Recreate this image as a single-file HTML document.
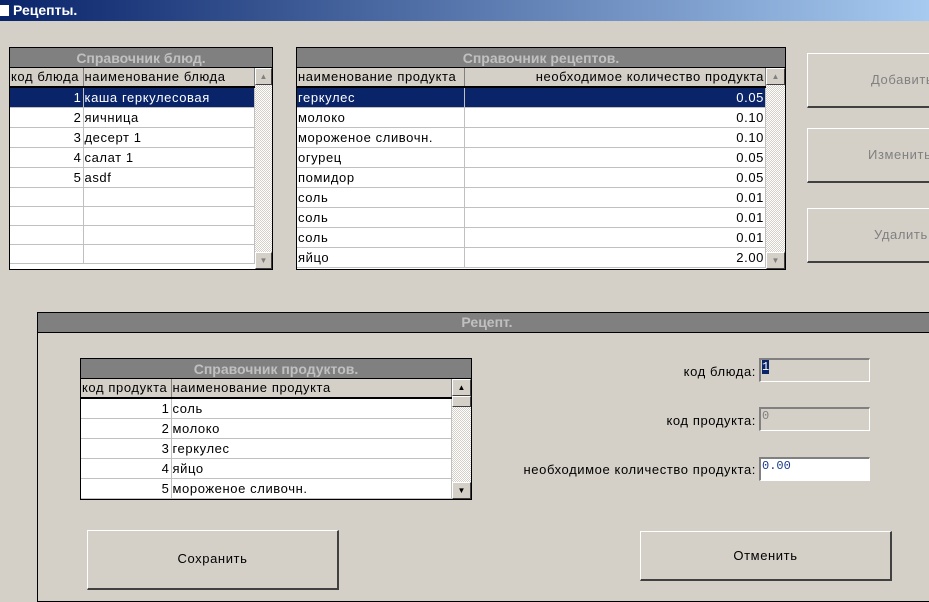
<html><head><style>
body{margin:0;width:929px;height:586px;overflow:hidden;background:#d4d0c8;font-family:"Liberation Sans",sans-serif;font-size:13px;letter-spacing:.6px;position:relative}
.a{position:absolute}
.tb{left:0;top:0;width:929px;height:21px;background:linear-gradient(90deg,#0a246a,#a6caf0);color:#fff;font-weight:bold;font-size:14px;line-height:21px;letter-spacing:0}
.grid{position:absolute;border:1px solid #000;background:#fff;overflow:hidden}
.gt{height:19px;background:#808080;color:#c0c0c0;font-weight:bold;font-size:14px;letter-spacing:0;text-align:center;line-height:20px;border-bottom:1px solid #000}
table{border-collapse:collapse;table-layout:fixed}
td{height:19px;border-right:1px solid #c0c0c0;border-bottom:1px solid #c0c0c0;padding:0 1px;white-space:nowrap;overflow:hidden;font-size:13px;line-height:19px}
tr.h td{background:#d4d0c8;border-right:1px solid #808080;border-bottom:2px solid #000;height:18px;line-height:18px}
tr.s td{background:#0a246a;color:#fff}
.r{text-align:right}
.sb{position:absolute;right:0;background:repeating-conic-gradient(#d4d0c8 0 25%,#fff 0 50%) 0 0/2px 2px}
.btn{position:absolute;background:#d4d0c8;border-top:1px solid #fff;border-left:1px solid #fff;border-right:2px solid #404040;border-bottom:2px solid #404040;box-sizing:border-box;text-align:center;font-size:13px}
.sbtn{position:absolute;width:17px;height:17px;background:#d4d0c8;border-top:1px solid #fff;border-left:1px solid #fff;border-right:1px solid #404040;border-bottom:1px solid #404040;box-sizing:border-box;font-size:8px;text-align:center;line-height:15px;letter-spacing:0}
.lbl{position:absolute;right:173px;font-size:13px}
.inp{position:absolute;left:759px;width:111px;height:24px;box-sizing:border-box;border-top:2px solid #808080;border-left:2px solid #808080;border-right:1px solid #fff;border-bottom:1px solid #fff;font-family:"Liberation Mono",monospace;font-size:12px;letter-spacing:0;padding-left:1px}
</style></head><body>
<div class="a tb"><span style="display:inline-block;width:9px;height:11px;background:#fff;margin:0 4px 0 0;vertical-align:-1px"></span>Рецепты.</div>

<div class="grid" style="left:9px;top:47px;width:262px;height:221px">
<div class="gt">Справочник блюд.</div>
<table style="width:245px"><col style="width:73px"><col>
<tr class="h"><td>код блюда</td><td>наименование блюда</td></tr>
<tr class="s"><td class="r">1</td><td>каша геркулесовая</td></tr>
<tr><td class="r">2</td><td>яичница</td></tr>
<tr><td class="r">3</td><td>десерт 1</td></tr>
<tr><td class="r">4</td><td>салат 1</td></tr>
<tr><td class="r">5</td><td>asdf</td></tr>
<tr><td></td><td></td></tr><tr><td></td><td></td></tr><tr><td></td><td></td></tr><tr><td></td><td></td></tr>
</table>
<div class="sb" style="top:20px;width:17px;height:201px"></div>
<div class="sbtn" style="right:0;top:20px;color:#808080">▲</div>
<div class="sbtn" style="right:0;bottom:0;color:#808080">▼</div>
</div>

<div class="grid" style="left:296px;top:47px;width:488px;height:221px">
<div class="gt">Справочник рецептов.</div>
<table style="width:469px"><col style="width:167px"><col>
<tr class="h"><td>наименование продукта</td><td class="r">необходимое количество продукта</td></tr>
<tr class="s"><td>геркулес</td><td class="r">0.05</td></tr>
<tr><td>молоко</td><td class="r">0.10</td></tr>
<tr><td>мороженое сливочн.</td><td class="r">0.10</td></tr>
<tr><td>огурец</td><td class="r">0.05</td></tr>
<tr><td>помидор</td><td class="r">0.05</td></tr>
<tr><td>соль</td><td class="r">0.01</td></tr>
<tr><td>соль</td><td class="r">0.01</td></tr>
<tr><td>соль</td><td class="r">0.01</td></tr>
<tr><td>яйцо</td><td class="r">2.00</td></tr>
</table>
<div class="sb" style="top:20px;width:19px;height:201px"></div>
<div class="sbtn" style="right:0;top:20px;width:19px;color:#808080">▲</div>
<div class="sbtn" style="right:0;bottom:0;width:19px;color:#808080">▼</div>
</div>

<div class="btn" style="left:807px;top:53px;width:140px;height:55px;line-height:52px;color:#808080;text-align:left;padding-left:63px">Добавить</div>
<div class="btn" style="left:807px;top:128px;width:140px;height:55px;line-height:52px;color:#808080;text-align:left;padding-left:60px">Изменить</div>
<div class="btn" style="left:807px;top:208px;width:140px;height:55px;line-height:52px;color:#808080;text-align:left;padding-left:66px">Удалить</div>

<div class="a" style="left:37px;top:312px;width:900px;height:290px;border:1px solid #000;box-sizing:border-box"><div class="gt" style="height:19px;line-height:19px">Рецепт.</div></div>

<div class="grid" style="left:80px;top:358px;width:390px;height:140px">
<div class="gt">Справочник продуктов.</div>
<table style="width:371px"><col style="width:90px"><col>
<tr class="h"><td>код продукта</td><td>наименование продукта</td></tr>
<tr><td class="r">1</td><td>соль</td></tr>
<tr><td class="r">2</td><td>молоко</td></tr>
<tr><td class="r">3</td><td>геркулес</td></tr>
<tr><td class="r">4</td><td>яйцо</td></tr>
<tr><td class="r">5</td><td>мороженое сливочн.</td></tr>
</table>
<div class="sb" style="top:20px;width:19px;height:120px"></div>
<div class="sbtn" style="right:0;top:20px;width:19px">▲</div>
<div class="sbtn" style="right:0;top:37px;width:19px;height:11px"></div>
<div class="sbtn" style="right:0;bottom:0;width:19px">▼</div>
</div>

<div class="lbl" style="top:364px">код блюда:</div>
<div class="inp" style="top:358px;background:#d4d0c8"><span style="background:#0a246a;color:#fff">1</span></div>
<div class="lbl" style="top:413px">код продукта:</div>
<div class="inp" style="top:407px;background:#d4d0c8;color:#808080">0</div>
<div class="lbl" style="top:462px">необходимое количество продукта:</div>
<div class="inp" style="top:457px;background:#fff;color:#1a3a8a">0.00</div>

<div class="btn" style="left:87px;top:530px;width:252px;height:60px;line-height:56px">Сохранить</div>
<div class="btn" style="left:640px;top:531px;width:252px;height:50px;line-height:48px">Отменить</div>
</body></html>
